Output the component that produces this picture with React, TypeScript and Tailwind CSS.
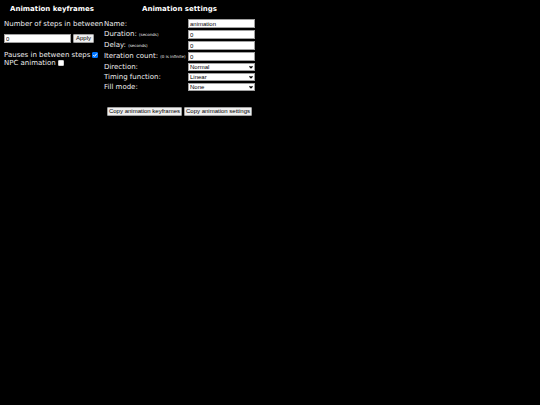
import type { ReactNode } from "react";
import { useState } from "react";

const textFields = [
  { id: "name", label: "Name:", value: "animation" },
  { id: "duration", label: "Duration:", hint: "(seconds)", value: "0" },
  { id: "delay", label: "Delay:", hint: "(seconds)", value: "0" },
  { id: "count", label: "Iteration count:", hint: "(0 is infinite)", value: "0" },
];

const selectFields = [
  { id: "direction", label: "Direction:", options: ["Normal", "Reverse", "Alternate", "Alternate-reverse"] },
  { id: "timing", label: "Timing function:", options: ["Linear", "Ease", "Ease-in", "Ease-out", "Ease-in-out"] },
  { id: "fill", label: "Fill mode:", options: ["None", "Forwards", "Backwards", "Both"] },
];

const inputClass =
  "block h-[9px] w-[67px] border border-[#a0a0a0] bg-white px-px font-['Liberation_Sans',sans-serif] text-[6px] leading-[7px] text-black";

function Button({ children }: { children: ReactNode }) {
  return (
    <button
      type="button"
      className="h-[9px] min-w-[21px] rounded-[1px] border border-[#a0a0a0] bg-[#efefef] px-px font-['Liberation_Sans',sans-serif] text-[6px] leading-[7px] whitespace-nowrap text-black"
    >
      {children}
    </button>
  );
}

function Checkbox({ id, label, defaultChecked = false }: { id: string; label: string; defaultChecked?: boolean }) {
  const [checked, setChecked] = useState(defaultChecked);
  return (
    <div className="flex h-2 items-center gap-[2px] whitespace-nowrap">
      <label htmlFor={id}>{label}</label>
      <span className="relative block h-[6px] w-[6px] shrink-0">
        <input
          id={id}
          type="checkbox"
          checked={checked}
          onChange={(e) => setChecked(e.target.checked)}
          className="block h-[6px] w-[6px] appearance-none rounded-[1px] border border-[#d0d0d0] bg-white checked:border-[#0075ff] checked:bg-[#0075ff]"
        />
        {checked && (
          <svg viewBox="0 0 12 12" className="pointer-events-none absolute inset-0 h-full w-full" fill="none" stroke="white" strokeWidth="2">
            <path d="M2.5 6.2 5 8.7 9.7 3.2" />
          </svg>
        )}
      </span>
    </div>
  );
}

export default function App() {
  return (
    <div className="min-h-screen bg-black px-1 pt-[5px] font-['DejaVu_Sans',sans-serif] text-[7px] leading-[8px] text-[#eeeeee]">
      <main className="flex items-start gap-1">
        <section className="w-24 shrink-0">
          <h2 className="text-center font-bold text-white">Animation keyframes</h2>
          <label htmlFor="steps" className="mt-[7px] block whitespace-nowrap">
            Number of steps in between
          </label>
          <div className="mt-[6px] flex gap-[2px]">
            <input id="steps" type="text" defaultValue="0" className={inputClass} />
            <Button>Apply</Button>
          </div>
          <div className="mt-2">
            <Checkbox id="pauses" label="Pauses in between steps" defaultChecked />
            <Checkbox id="npc" label="NPC animation" />
          </div>
        </section>

        <section className="w-[151px] shrink-0">
          <h2 className="text-center font-bold text-white">Animation settings</h2>
          <div className="mt-[5px]">
            {textFields.map((field) => (
              <div key={field.id} className="flex h-[11px] items-center justify-between">
                <label htmlFor={field.id} className="whitespace-nowrap">
                  {field.label} {field.hint && <small className="text-[4px]">{field.hint}</small>}
                </label>
                <input id={field.id} type="text" defaultValue={field.value} className={inputClass} />
              </div>
            ))}
            {selectFields.map((field) => (
              <div key={field.id} className="flex h-[10px] items-center justify-between">
                <label htmlFor={field.id} className="whitespace-nowrap">
                  {field.label}
                </label>
                <span className="relative block">
                  <select
                    id={field.id}
                    className="block h-2 w-[67px] appearance-none border border-[#a0a0a0] bg-white px-px font-['Liberation_Sans',sans-serif] text-[6px] leading-[6px] text-black"
                  >
                    {field.options.map((option) => (
                      <option key={option}>{option}</option>
                    ))}
                  </select>
                  <svg
                    viewBox="0 0 8 8"
                    className="pointer-events-none absolute top-[2px] right-[2px] h-1 w-1"
                    fill="none"
                    stroke="black"
                    strokeWidth="2.5"
                  >
                    <path d="M1 2.5 4 5.5 7 2.5" />
                  </svg>
                </span>
              </div>
            ))}
          </div>
          <div className="mt-[15px] flex justify-center gap-[2px]">
            <Button>Copy animation keyframes</Button>
            <Button>Copy animation settings</Button>
          </div>
        </section>
      </main>
    </div>
  );
}
